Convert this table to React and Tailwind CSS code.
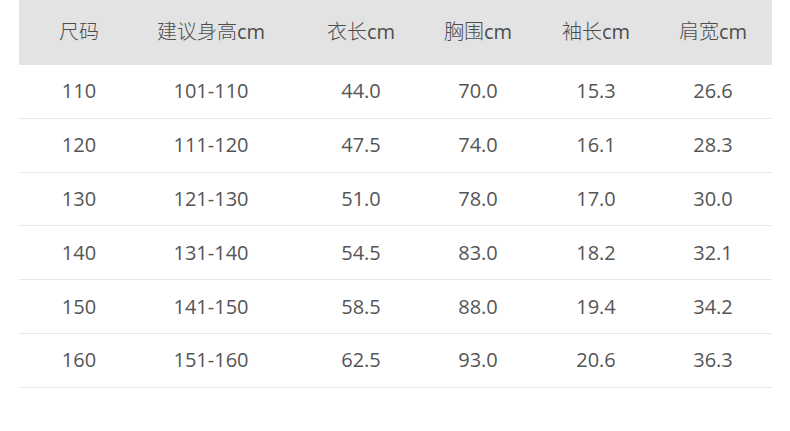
const headers = ["尺码", "建议身高", "衣长", "胸围", "袖长", "肩宽"];

const rows = [
  ["110", "101-110", "44.0", "70.0", "15.3", "26.6"],
  ["120", "111-120", "47.5", "74.0", "16.1", "28.3"],
  ["130", "121-130", "51.0", "78.0", "17.0", "30.0"],
  ["140", "131-140", "54.5", "83.0", "18.2", "32.1"],
  ["150", "141-150", "58.5", "88.0", "19.4", "34.2"],
  ["160", "151-160", "62.5", "93.0", "20.6", "36.3"],
];

const cols = "grid grid-cols-[120px_144px_156px_78px_158px_76px_1fr] items-center";

export default function App() {
  return (
    <div
      className="w-[790px] h-[431px] bg-white pl-[19px] pr-[18px] text-[20px] text-[#555]"
      style={{ fontFamily: '"Open Sans", "Noto Sans CJK SC", sans-serif' }}
    >
      <div className={`${cols} h-[65px] bg-[#e3e3e3]`}>
        {headers.map((h, i) => (
          <div key={h} className="text-center text-[#4d4d4d] pb-[1px]">
            <span className="font-light">{h}</span>
            {i > 0 && "cm"}
          </div>
        ))}
      </div>
      {rows.map((r) => (
        <div key={r[0]} className={`${cols} h-[53.8px] border-b border-[#e6e6e6]`}>
          {r.map((c, i) => (
            <div key={i} className="text-center">
              {c}
            </div>
          ))}
        </div>
      ))}
    </div>
  );
}
